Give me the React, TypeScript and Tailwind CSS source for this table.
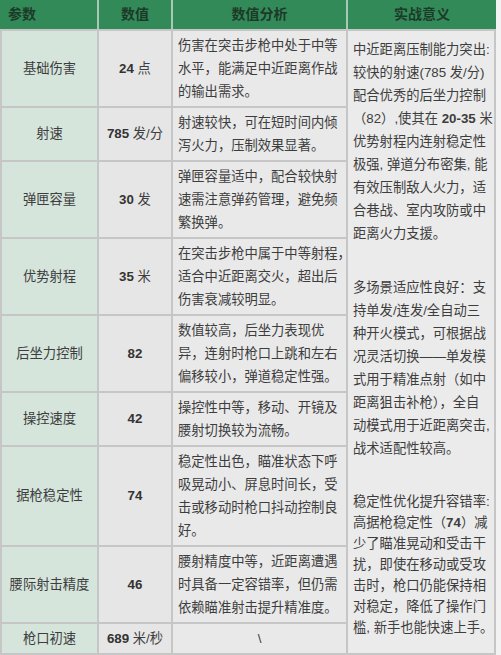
const font = { fontFamily: '"Liberation Sans", "Noto Sans CJK SC", sans-serif' };

type Row = { name: string; num: string; unit: string; lines: string[] };

const rows: Row[] = [
  { name: "基础伤害", num: "24", unit: " 点", lines: ["伤害在突击步枪中处于中等", "水平，能满足中近距离作战", "的输出需求。"] },
  { name: "射速", num: "785", unit: " 发/分", lines: ["射速较快，可在短时间内倾", "泻火力，压制效果显著。"] },
  { name: "弹匣容量", num: "30", unit: " 发", lines: ["弹匣容量适中，配合较快射", "速需注意弹药管理，避免频", "繁换弹。"] },
  { name: "优势射程", num: "35", unit: " 米", lines: ["在突击步枪中属于中等射程，", "适合中近距离交火，超出后", "伤害衰减较明显。"] },
  { name: "后坐力控制", num: "82", unit: "", lines: ["数值较高，后坐力表现优", "异，连射时枪口上跳和左右", "偏移较小，弹道稳定性强。"] },
  { name: "操控速度", num: "42", unit: "", lines: ["操控性中等，移动、开镜及", "腰射切换较为流畅。"] },
  { name: "据枪稳定性", num: "74", unit: "", lines: ["稳定性出色，瞄准状态下呼", "吸晃动小、屏息时间长，受", "击或移动时枪口抖动控制良", "好。"] },
  { name: "腰际射击精度", num: "46", unit: "", lines: ["腰射精度中等，近距离遭遇", "时具备一定容错率，但仍需", "依赖瞄准射击提升精准度。"] },
  { name: "枪口初速", num: "689", unit: " 米/秒", lines: ["\\"] },
];

function Line({ children }: { children: React.ReactNode }) {
  return <div className="whitespace-nowrap">{children}</div>;
}

export default function App() {
  return (
    <div className="h-[655px] w-[501px] overflow-hidden bg-[#f2f2f2] text-[13.3px] text-[#3d3d3d]" style={font}>
      <div className="w-[496px]">
        {/* header */}
        <div className="grid h-[29px] grid-cols-[97px_72px_173px_148px] gap-x-[2px] bg-[#a9c9b4] text-[14px] font-bold text-[#1d3a28]">
          <div className="flex items-center bg-[#328a59] pl-[8px]">参数</div>
          <div className="flex items-center justify-center bg-[#328a59]">数值</div>
          <div className="flex items-center justify-center bg-[#328a59]">数值分析</div>
          <div className="flex items-center justify-center bg-[#328a59]">实战意义</div>
        </div>

        {/* body */}
        <div className="grid grid-cols-[95px_72px_173px_146px] gap-[2px] bg-[#c6c6c6] p-[2px]">
          <div className="col-start-4 row-span-9 row-start-1 bg-[#ebebeb] px-[5px] pt-[7px]">
            <div className="leading-[23px]">
              <Line>中近距离压制能力突出:</Line>
              <Line>较快的射速(785 发/分)</Line>
              <Line>配合优秀的后坐力控制</Line>
              <Line>
                （82）,使其在 <span className="font-bold">20-35</span> 米
              </Line>
              <Line>优势射程内连射稳定性</Line>
              <Line>极强, 弹道分布密集, 能</Line>
              <Line>有效压制敌人火力，适</Line>
              <Line>合巷战、室内攻防或中</Line>
              <Line>距离火力支援。</Line>
            </div>
            <div className="mt-[31px] leading-[23px]">
              <Line>多场景适应性良好：支</Line>
              <Line>持单发/连发/全自动三</Line>
              <Line>种开火模式，可根据战</Line>
              <Line>况灵活切换——单发模</Line>
              <Line>式用于精准点射（如中</Line>
              <Line>距离狙击补枪），全自</Line>
              <Line>动模式用于近距离突击,</Line>
              <Line>战术适配性较高。</Line>
            </div>
            <div className="mt-[31px] leading-[21px]">
              <Line>稳定性优化提升容错率:</Line>
              <Line>
                高据枪稳定性（<span className="font-bold">74</span>）减
              </Line>
              <Line>少了瞄准晃动和受击干</Line>
              <Line>扰，即使在移动或受攻</Line>
              <Line>击时，枪口仍能保持相</Line>
              <Line>对稳定，降低了操作门</Line>
              <Line>槛, 新手也能快速上手。</Line>
            </div>
          </div>

          {rows.map((r) => (
            <>
              <div key={r.name + "a"} className="flex items-center justify-center bg-[#d5e5dc]">
                {r.name}
              </div>
              <div key={r.name + "b"} className="flex items-center justify-center bg-[#e6e6e6]">
                <span className="font-bold text-[#333]">{r.num}</span>
                <span className="whitespace-pre">{r.unit}</span>
              </div>
              <div
                key={r.name + "c"}
                className={
                  r.lines[0] === "\\"
                    ? "bg-[#e9e9e9] py-[3px] text-center leading-[23px]"
                    : "bg-[#e9e9e9] px-[5px] py-[3px] leading-[23px]"
                }
              >
                {r.lines.map((l, i) => (
                  <Line key={i}>{l}</Line>
                ))}
              </div>
            </>
          ))}
        </div>
      </div>
    </div>
  );
}
